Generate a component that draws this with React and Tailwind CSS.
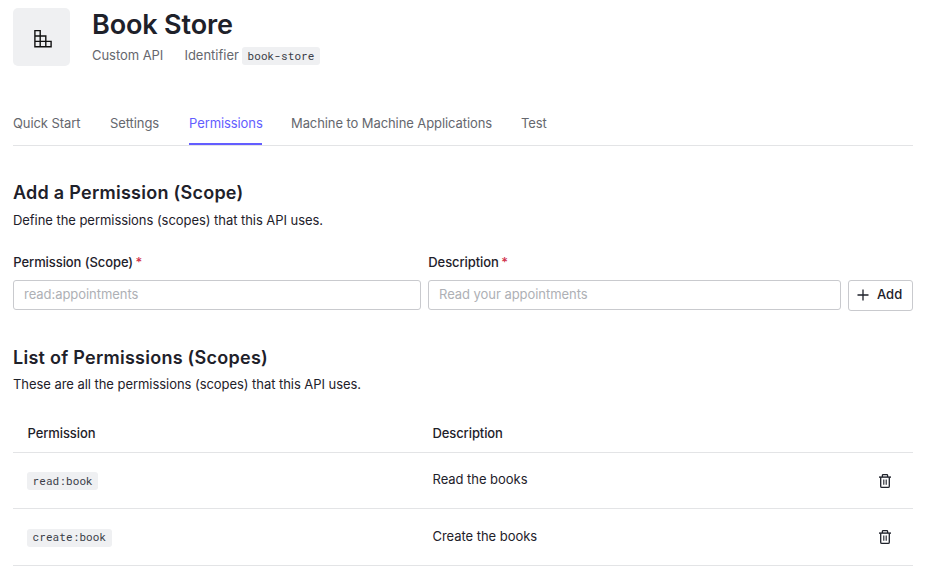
const tabs = [
  { label: "Quick Start", width: "w-[68px]" },
  { label: "Settings", width: "w-[50px]" },
  { label: "Permissions", width: "w-[73px]", active: true },
  { label: "Machine to Machine Applications", width: "w-[201px]" },
  { label: "Test", width: "w-[26px]" },
];

const permissions = [
  { scope: "read:book", description: "Read the books", height: "h-14" },
  { scope: "create:book", description: "Create the books", height: "h-[57px]" },
];

function BlocksIcon() {
  return (
    <svg width="20" height="20" viewBox="0 0 20 20" fill="none" stroke="#111" strokeWidth="1.4">
      <path d="M1.9 1.6h5.3v16.2H1.9zM1.9 7h10.9v10.8M1.9 12.4h16.2v5.4H1.9M7.2 7v10.8" />
    </svg>
  );
}

function TrashIcon() {
  return (
    <svg width="14" height="16" viewBox="0 0 14 16" fill="none" stroke="#1e212a">
      <path d="M1 4.1h12" strokeWidth="1.4" />
      <path d="M4.4 4V2.4q0-.8.8-.8h3.6q.8 0 .8.8V4" strokeWidth="1.3" />
      <path d="M2.7 4.2v9q0 1.2 1.2 1.2h6.2q1.2 0 1.2-1.2v-9" strokeWidth="1.3" />
      <path d="M5.8 6.5v5.2M8.2 6.5v5.2" strokeWidth="1.1" />
    </svg>
  );
}

function Code({ children }) {
  return (
    <code className="flex h-[18px] items-center rounded-[3px] bg-[#eff0f2] px-[5.5px] font-['Roboto_Mono','Liberation_Mono',monospace] text-[11px] tracking-[0.1px] text-[#3b3e48]">
      {children}
    </code>
  );
}

function Field({ label, placeholder, width }) {
  return (
    <label className={`flex flex-col ${width}`}>
      <span className="h-5 pl-[0.3px] font-medium leading-5 tracking-[-0.08px]">
        {label} <span className="-ml-px text-[#d0304a]">*</span>
      </span>
      <input
        placeholder={placeholder}
        className="mt-2 h-[30px] rounded-[3px] border border-[#c9cace] px-[10px] pb-[2px] tracking-[-0.05px] placeholder:text-[#aeb0b5]"
      />
    </label>
  );
}

export default function App() {
  return (
    <main className="h-[572px] w-[929px] overflow-hidden bg-white pl-[13px] pr-4 pt-2 font-[Inter,sans-serif] text-[13px] text-[#1e212a]">
      <header className="flex h-[58px]">
        <div className="flex h-[58px] w-[57px] items-center justify-center rounded-[5px] bg-[#eff0f2] pl-[3px] pt-[3px]">
          <BlocksIcon />
        </div>
        <div className="ml-[22px]">
          <h1 className="h-8 pt-px text-[27px] font-[560] leading-8 tracking-[-0.15px]">Book Store</h1>
          <div className="mt-[7px] flex h-[18px] items-center text-[#65676e]">
            <span className="w-[92.4px] tracking-[-0.05px]">Custom API</span>
            <span className="w-[57.6px]">Identifier</span>
            <Code>book-store</Code>
          </div>
        </div>
      </header>

      <nav className="mt-[38px] flex h-[42px] gap-x-[29px] border-b border-[#e3e4e6] tracking-[-0.09px] text-[#65676e]">
        {tabs.map((tab) => (
          <a
            key={tab.label}
            className={`h-[41px] whitespace-nowrap pt-[9px] leading-5 ${tab.width} ${
              tab.active ? "border-b-2 border-[#635dff] text-[#635dff]" : ""
            }`}
          >
            {tab.label}
          </a>
        ))}
      </nav>

      <section className="pt-[35px]">
        <h2 className="h-6 text-[18px] font-[560] leading-6 tracking-[0.26px]">Add a Permission (Scope)</h2>
        <p className="mt-[5px] h-5 leading-5 tracking-[-0.05px]">Define the permissions (scopes) that this API uses.</p>
        <form className="mt-[22px] flex h-[59px] items-start">
          <Field label="Permission (Scope)" placeholder="read:appointments" width="w-[408px]" />
          <div className="w-[7px]" />
          <Field label="Description" placeholder="Read your appointments" width="w-[413px]" />
          <button
            type="button"
            className="ml-[7px] mt-7 flex h-[31px] w-[65px] items-center rounded-[3px] border border-[#c9cace] pb-px pl-2 font-medium"
          >
            <svg width="12" height="12" viewBox="0 0 12 12" stroke="#1e212a" strokeWidth="1.3">
              <path d="M.5 6h11M6 .5v11" />
            </svg>
            <span className="ml-2">Add</span>
          </button>
        </form>
      </section>

      <section className="pt-[35px]">
        <h2 className="h-6 text-[18px] font-[560] leading-6 tracking-[0.26px]">List of Permissions (Scopes)</h2>
        <p className="mt-1 h-5 leading-5 tracking-[-0.05px]">These are all the permissions (scopes) that this API uses.</p>
        <div className="mt-[21px]">
          <div className="flex h-[38px] items-center border-b border-[#e3e4e6] pl-[14.5px] font-medium tracking-[-0.1px]">
            <span className="w-[405px]">Permission</span>
            <span>Description</span>
          </div>
          {permissions.map((item) => (
            <div key={item.scope} className={`flex items-center border-b border-[#e3e4e6] pl-[14px] ${item.height}`}>
              <div className="flex w-[405.5px] pt-px">
                <Code>{item.scope}</Code>
              </div>
              <span className="w-[445.5px] pb-px tracking-[-0.04px]">{item.description}</span>
              <TrashIcon />
            </div>
          ))}
        </div>
      </section>
    </main>
  );
}
